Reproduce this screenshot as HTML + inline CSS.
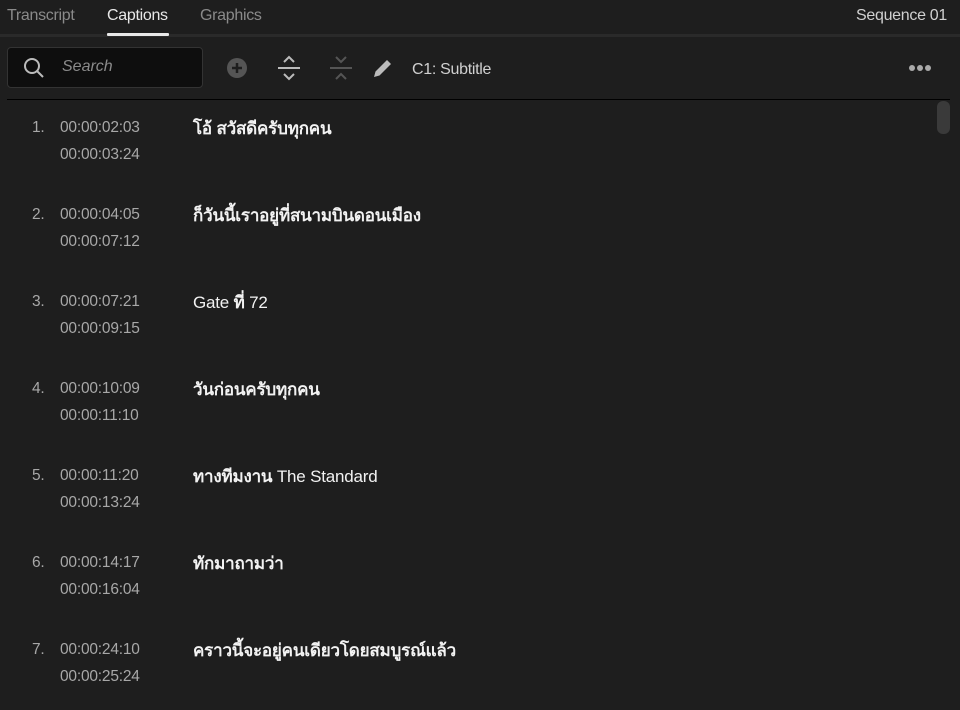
<!DOCTYPE html>
<html><head><meta charset="utf-8"><style>
body{margin:0;width:960px;height:710px;background:#1e1e1e;font-family:"Liberation Sans","DejaVu Sans",sans-serif;color:#aaa;overflow:hidden;position:relative}
.tab{position:absolute;top:7px;font-size:16px;color:#8a8a8a;letter-spacing:-0.3px}
.hline{position:absolute;left:0;top:34px;width:960px;height:3px;background:#2a2a2a}
.search{position:absolute;left:7px;top:47px;width:196px;height:41px;background:#0e0e0e;border:1px solid #333;border-radius:4px;box-sizing:border-box}
.div{position:absolute;left:7px;top:99px;width:943px;height:1px;background:#000}
.row{position:absolute;left:0;width:900px;font-size:15.5px;letter-spacing:-0.2px}
.n{position:absolute;left:32px;top:0;color:#a8a8a8}
.t{position:absolute;left:60px;color:#a8a8a8}
.c{position:absolute;left:193px;top:-4px;color:#f2f2f2;font-size:17px;font-weight:bold}
.c span{font-weight:normal}
</style></head><body>
<div class="tab" style="left:7px">Transcript</div>
<div class="tab" style="left:107px;color:#e8e8e8">Captions</div>
<div class="tab" style="left:200px">Graphics</div>
<div class="tab" style="left:856px;color:#d0d0d0">Sequence 01</div>
<div class="hline"></div>
<div style="position:absolute;left:107px;top:33px;width:62px;height:3px;background:#e8e8e8;border-radius:1px"></div>
<div class="search">
<svg width="24" height="24" style="position:absolute;left:14px;top:8px" viewBox="0 0 24 24"><circle cx="10" cy="10" r="7" fill="none" stroke="#bbb" stroke-width="2"/><line x1="15" y1="15" x2="21" y2="21" stroke="#bbb" stroke-width="2"/></svg>
<span style="position:absolute;left:54px;top:10px;font-style:italic;color:#8a8a8a;font-size:16px">Search</span></div>
<svg width="24" height="24" style="position:absolute;left:225px;top:56px" viewBox="0 0 24 24"><circle cx="12" cy="12" r="10" fill="#555"/><path d="M12 7v10M7 12h10" stroke="#1e1e1e" stroke-width="2.5"/></svg>
<svg width="26" height="28" style="position:absolute;left:276px;top:54px" viewBox="0 0 26 28"><path d="M8 8l5-5 5 5M8 20l5 5 5-5" fill="none" stroke="#bbb" stroke-width="2"/><line x1="2" y1="14" x2="24" y2="14" stroke="#bbb" stroke-width="2"/></svg>
<svg width="26" height="28" style="position:absolute;left:328px;top:54px" viewBox="0 0 26 28"><path d="M8 3l5 5 5-5M8 25l5-5 5 5" fill="none" stroke="#555" stroke-width="2"/><line x1="2" y1="14" x2="24" y2="14" stroke="#555" stroke-width="2"/></svg>
<svg width="24" height="24" style="position:absolute;left:371px;top:56px" viewBox="0 0 24 24"><path d="M3 21l1.5-5.5L16 4l4 4L8.5 19.5z" fill="#bbb"/></svg>
<div style="position:absolute;left:412px;top:61px;font-size:16px;color:#d0d0d0;letter-spacing:-0.3px">C1: Subtitle</div>
<div style="position:absolute;left:909px;top:65px;width:22px;height:6px">
<span style="position:absolute;left:0;width:6px;height:6px;border-radius:3px;background:#aaa"></span>
<span style="position:absolute;left:8px;width:6px;height:6px;border-radius:3px;background:#aaa"></span>
<span style="position:absolute;left:16px;width:6px;height:6px;border-radius:3px;background:#aaa"></span></div>
<div class="div"></div>
<div style="position:absolute;left:937px;top:101px;width:13px;height:33px;border-radius:6px;background:#3a3a3a"></div>

<div class="row" style="top:119px"><span class="n">1.</span><span class="t" style="top:0">00:00:02:03</span><span class="t" style="top:27px">00:00:03:24</span><span class="c">โอ้ สวัสดีครับทุกคน</span></div>
<div class="row" style="top:206px"><span class="n">2.</span><span class="t" style="top:0">00:00:04:05</span><span class="t" style="top:27px">00:00:07:12</span><span class="c">ก็วันนี้เราอยู่ที่สนามบินดอนเมือง</span></div>
<div class="row" style="top:293px"><span class="n">3.</span><span class="t" style="top:0">00:00:07:21</span><span class="t" style="top:27px">00:00:09:15</span><span class="c"><span>Gate</span> ที่ <span>72</span></span></div>
<div class="row" style="top:380px"><span class="n">4.</span><span class="t" style="top:0">00:00:10:09</span><span class="t" style="top:27px">00:00:11:10</span><span class="c">วันก่อนครับทุกคน</span></div>
<div class="row" style="top:467px"><span class="n">5.</span><span class="t" style="top:0">00:00:11:20</span><span class="t" style="top:27px">00:00:13:24</span><span class="c">ทางทีมงาน <span>The Standard</span></span></div>
<div class="row" style="top:554px"><span class="n">6.</span><span class="t" style="top:0">00:00:14:17</span><span class="t" style="top:27px">00:00:16:04</span><span class="c">ทักมาถามว่า</span></div>
<div class="row" style="top:641px"><span class="n">7.</span><span class="t" style="top:0">00:00:24:10</span><span class="t" style="top:27px">00:00:25:24</span><span class="c">คราวนี้จะอยู่คนเดียวโดยสมบูรณ์แล้ว</span></div>
</body></html>
